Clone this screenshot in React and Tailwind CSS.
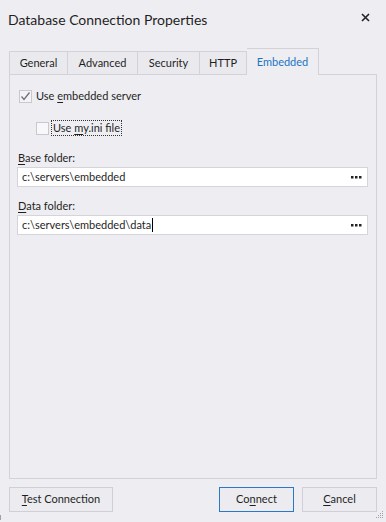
import React from "react";

const U = ({ children }) => <span className="underline underline-offset-2">{children}</span>;

const Dots = () => (
  <svg width="11" height="3" viewBox="0 0 11 3" className="mr-[1px]">
    <rect x="0" y="0" width="2.5" height="2.5" fill="#222" />
    <rect x="4" y="0" width="2.5" height="2.5" fill="#222" />
    <rect x="8" y="0" width="2.5" height="2.5" fill="#222" />
  </svg>
);

export default function App() {
  const font = { fontFamily: '"Segoe UI", Lato, "Noto Sans", sans-serif' };
  return (
    <div className="w-[386px] h-[522px] bg-[#eeeef2] flex flex-col relative text-[#1f1f1f] overflow-hidden" style={font}>
      {/* Title */}
      <div className="h-[48px] flex items-start justify-between pl-[8px] pr-[16px] pt-[9px]">
        <div className="text-[14px] leading-[22px]">Database Connection Properties</div>
        <svg width="9" height="9" viewBox="0 0 9 9" className="mt-[4px]">
          <path d="M1 1 L8 8 M8 1 L1 8" stroke="#222" strokeWidth="1.6" />
        </svg>
      </div>

      {/* Tabs */}
      <div className="flex items-end pl-[9px] h-[26px] text-[11px]">
        <div className="h-[23px] w-[59px] flex items-center justify-center border border-b-0 border-[#d2d2d8] bg-[#eaeaee]">General</div>
        <div className="h-[23px] w-[70px] flex items-center justify-center border border-l-0 border-b-0 border-[#d2d2d8] bg-[#eaeaee]">Advanced</div>
        <div className="h-[23px] w-[62px] flex items-center justify-center border border-l-0 border-b-0 border-[#d2d2d8] bg-[#eaeaee]">Security</div>
        <div className="h-[23px] w-[47px] flex items-center justify-center border border-l-0 border-b-0 border-[#d2d2d8] bg-[#eaeaee]">HTTP</div>
        <div className="h-[27px] w-[72px] flex items-center justify-center border border-l-0 border-b-0 border-[#d2d2d8] bg-[#eeeef2] text-[#1c74c4] relative top-[1px] z-10">Embedded</div>
      </div>

      {/* Panel */}
      <div className="mx-[9px] h-[405px] border border-[#d2d2d8] flex flex-col text-[11px]">
        <div className="flex items-center pl-[9px] mt-[14px] h-[14px]">
          <div className="w-[13px] h-[13px] border border-[#c8c8ce] bg-[#f4f4f6] flex items-center justify-center">
            <svg width="11" height="11" viewBox="0 0 11 11">
              <path d="M1.5 5.5 L4 8.5 L9.5 1.5" fill="none" stroke="#707078" strokeWidth="1.3" />
            </svg>
          </div>
          <span className="ml-[4px]">Use <U>e</U>mbedded server</span>
        </div>
        <div className="flex items-center pl-[26px] mt-[17px] h-[16px]">
          <div className="w-[13px] h-[13px] border border-[#c8c8ce] bg-[#f8f8fa]" />
          <span className="ml-[2px] px-[1px] border border-dotted border-[#333] leading-[14px]">Use <U>m</U>y.ini file</span>
        </div>

        <div className="pl-[8px] mt-[14px] leading-[16px]"><U>B</U>ase folder:</div>
        <div className="ml-[7px] mr-[8px] mt-[1px] h-[20px] bg-white border border-[#d4d4da] flex items-center justify-between pl-[4px] pr-[4px]">
          <span>c:\servers\embedded</span>
          <Dots />
        </div>

        <div className="pl-[8px] mt-[11px] leading-[16px]"><U>D</U>ata folder:</div>
        <div className="ml-[7px] mr-[8px] mt-[1px] h-[20px] bg-white border border-[#d4d4da] flex items-center justify-between pl-[4px] pr-[4px]">
          <span className="flex items-center">c:\servers\embedded\data<span className="inline-block w-[1px] h-[14px] bg-black ml-[1px]" /></span>
          <Dots />
        </div>
      </div>

      {/* Buttons */}
      <div className="flex items-center mt-[8px] px-[9px] text-[11px]">
        <div className="w-[104px] h-[25px] border border-[#cfcfd5] bg-[#ececf0] flex items-center justify-center"><span><U>T</U>est Connection</span></div>
        <div className="flex-1" />
        <div className="w-[75px] h-[25px] border border-[#2a78c8] bg-[#ececf0] flex items-center justify-center"><span>Co<U>n</U>nect</span></div>
        <div className="w-[75px] h-[25px] ml-[8px] border border-[#cfcfd5] bg-[#ececf0] flex items-center justify-center"><span><U>C</U>ancel</span></div>
      </div>

      {/* size grip */}
      <svg className="absolute right-[2px] bottom-[3px]" width="8" height="8" viewBox="0 0 8 8">
        <rect x="6" y="0" width="1" height="1" fill="#a0a0a8" />
        <rect x="4" y="2" width="1" height="1" fill="#a0a0a8" />
        <rect x="6" y="2" width="1" height="1" fill="#a0a0a8" />
        <rect x="2" y="4" width="1" height="1" fill="#a0a0a8" />
        <rect x="4" y="4" width="1" height="1" fill="#a0a0a8" />
        <rect x="6" y="4" width="1" height="1" fill="#a0a0a8" />
        <rect x="0" y="6" width="1" height="1" fill="#a0a0a8" />
        <rect x="2" y="6" width="1" height="1" fill="#a0a0a8" />
        <rect x="4" y="6" width="1" height="1" fill="#a0a0a8" />
        <rect x="6" y="6" width="1" height="1" fill="#a0a0a8" />
      </svg>
      <div className="absolute left-[0px] bottom-[2px] w-[1px] h-[5px] bg-[#a0a0a8]" />
    </div>
  );
}
